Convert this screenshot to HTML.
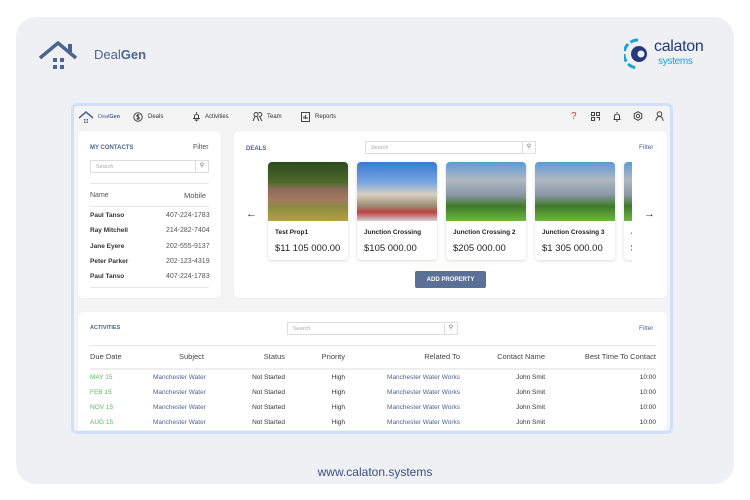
<!DOCTYPE html>
<html><head><meta charset="utf-8"><style>
*{margin:0;padding:0;box-sizing:border-box}
body{width:750px;height:500px;background:#fff;font-family:"Liberation Sans",sans-serif;position:relative;overflow:hidden}
.a{position:absolute}
.outer{left:16px;top:17px;width:718px;height:467px;background:#eef0f4;border-radius:20px}
.frame{left:71px;top:103px;width:602px;height:331px;border:3px solid #cfe0fa;border-radius:6px;background:#f4f4f5}
.panel{background:#fff;border-radius:5px;box-shadow:0 0 2px rgba(0,0,0,.06)}
.t{font-size:7px;color:#333;white-space:nowrap}
.hd{font-size:6px;color:#4a6590;font-weight:bold}
.srch{border:1px solid #ddd;height:13px;font-size:5.5px;color:#aaa;padding:3px 5px;background:#fff}
.srch i{position:absolute;right:0;top:0;width:13px;height:11px;border-left:1px solid #ddd;font-style:normal;text-align:center;color:#666;font-size:6px;line-height:11px}
.card{width:80px;height:98px;background:#fff;border-radius:4px;box-shadow:0 1px 3px rgba(0,0,0,.15);overflow:hidden}
.img{height:59px}
.ct{font-size:6.5px;font-weight:bold;color:#222;position:absolute;left:7px;top:67px;white-space:nowrap}
.cp{font-size:9.5px;color:#222;position:absolute;left:7px;top:81px;white-space:nowrap}
.g{color:#5cb85c}.b{color:#4a6590}
.r{text-align:right}
svg.i{position:absolute;fill:none;stroke:#444;stroke-width:1}
</style></head><body>
<div class="a outer"></div>
<svg class="a" style="left:38px;top:40px" width="42" height="32" viewBox="0 0 42 32"><path d="M2 18 L20 3 L38 18" fill="none" stroke="#4a6590" stroke-width="3.5"/><rect x="30" y="4" width="4" height="8" fill="#4a6590"/><rect x="15" y="18" width="4" height="4" fill="#4a6590"/><rect x="22" y="18" width="4" height="4" fill="#4a6590"/><rect x="15" y="25" width="4" height="4" fill="#4a6590"/><rect x="22" y="25" width="4" height="4" fill="#4a6590"/></svg>
<div class="a" style="left:94px;top:47px;font-size:13px;color:#4a6590">Deal<b>Gen</b></div>
<svg class="a" style="left:624px;top:38px" width="28" height="32" viewBox="0 0 28 32"><path d="M14 2 A14 14 0 0 0 14 30" fill="none" stroke="#1aa3d6" stroke-width="3" stroke-dasharray="8 3"/><circle cx="15" cy="16" r="8" fill="#243a7a"/><circle cx="17" cy="16" r="3.5" fill="#eef0f4"/></svg>
<div class="a" style="left:654px;top:38px;font-size:16px;color:#243a7a;letter-spacing:-.3px">calaton</div>
<div class="a" style="left:658px;top:56px;font-size:10px;color:#1aa3d6;letter-spacing:-.3px">systems</div>

<div class="a frame"></div>
<!-- nav -->
<svg class="a" style="left:78px;top:110px" width="16" height="14" viewBox="0 0 16 14"><path d="M1 8 L8 2 L15 8" fill="none" stroke="#4a6590" stroke-width="1.5"/><rect x="6" y="9" width="1.5" height="1.5" fill="#4a6590"/><rect x="8.5" y="9" width="1.5" height="1.5" fill="#4a6590"/><rect x="6" y="11.5" width="1.5" height="1.5" fill="#4a6590"/><rect x="8.5" y="11.5" width="1.5" height="1.5" fill="#4a6590"/></svg>
<div class="a t" style="left:98px;top:114px;font-size:5.5px;color:#4a6590">Deal<b>Gen</b></div>
<svg class="i" style="left:133px;top:112px" width="10" height="10" viewBox="0 0 10 10"><circle cx="5" cy="5" r="4.2"/><path d="M6.5 3.3 Q5 2.5 4 3.3 Q3.3 4.3 5 5 Q6.8 5.7 6 6.7 Q5 7.5 3.5 6.7 M5 2v6"/></svg>
<div class="a t" style="left:148px;top:114px;font-size:6px">Deals</div>
<svg class="i" style="left:192px;top:111px" width="9" height="11" viewBox="0 0 9 11"><path d="M4.5 1v1.5 M2.5 7 V4.5 Q4.5 2 6.5 4.5 V7 M1 7.5 H8 M4.5 9v1.5 M2.5 9h4"/></svg>
<div class="a t" style="left:205px;top:114px;font-size:6px">Activities</div>
<svg class="i" style="left:252px;top:111px" width="11" height="11" viewBox="0 0 11 11"><circle cx="4" cy="3.5" r="2"/><path d="M1 10 L3 5.5 M5 5.5 L7 10 M6.5 2 A2 2 0 1 1 7.5 5.5 L10 10"/></svg>
<div class="a t" style="left:267px;top:114px;font-size:6px">Team</div>
<svg class="i" style="left:301px;top:112px" width="9" height="10" viewBox="0 0 9 10"><rect x="0.5" y="0.5" width="8" height="9"/><path d="M3 7V4 M4.5 7V3 M6 7V5"/></svg>
<div class="a t" style="left:315px;top:114px;font-size:6px">Reports</div>
<div class="a t" style="left:571px;top:111px;font-size:10px;color:#e33">?</div>
<svg class="i" style="left:591px;top:112px" width="9" height="9" viewBox="0 0 9 9"><rect x="0.5" y="0.5" width="3" height="3"/><rect x="5.5" y="0.5" width="3" height="3"/><rect x="0.5" y="5.5" width="3" height="3"/><path d="M5.5 5.5h3v3"/></svg>
<svg class="i" style="left:613px;top:111px" width="8" height="11" viewBox="0 0 8 11"><path d="M4 1v1 M1.5 8V4.5 Q4 1.5 6.5 4.5V8 M0.5 8.5h7 M3 10h2"/></svg>
<svg class="i" style="left:633px;top:111px" width="10" height="10" viewBox="0 0 10 10"><path d="M5 0.7 L8.8 2.8 V7.2 L5 9.3 L1.2 7.2 V2.8Z"/><circle cx="5" cy="5" r="1.7"/></svg>
<svg class="i" style="left:655px;top:111px" width="9" height="10" viewBox="0 0 9 10"><circle cx="4.5" cy="3" r="2.3"/><path d="M0.8 9.8 Q1.5 5.5 4.5 5.5 Q7.5 5.5 8.2 9.8"/></svg>

<!-- contacts -->
<div class="a panel" style="left:78px;top:131px;width:143px;height:167px"></div>
<div class="a hd" style="left:90px;top:145px">MY CONTACTS</div>
<div class="a t" style="left:193px;top:144px;color:#555">Filter</div>
<div class="a srch" style="left:90px;top:160px;width:119px">Search<i>&#9906;</i></div>
<div class="a" style="left:90px;top:183px;width:119px;border-top:1px solid #e5e5e5"></div>
<div class="a t" style="left:90px;top:192px;color:#555">Name</div><div class="a t" style="left:184px;top:191px;font-size:7.5px;color:#555">Mobile</div>
<div class="a" style="left:90px;top:206px;width:119px;border-top:1px solid #e5e5e5"></div>
<div class="a t" style="left:90px;top:212px;font-weight:bold;font-size:6.5px">Paul Tanso</div><div class="a t" style="left:166px;top:212px;color:#555">407-224-1783</div>
<div class="a t" style="left:90px;top:227px;font-weight:bold;font-size:6.5px">Ray Mitchell</div><div class="a t" style="left:166px;top:227px;color:#555">214-282-7404</div>
<div class="a t" style="left:90px;top:243px;font-weight:bold;font-size:6.5px">Jane Eyere</div><div class="a t" style="left:166px;top:243px;color:#555">202-555-9137</div>
<div class="a t" style="left:90px;top:258px;font-weight:bold;font-size:6.5px">Peter Parker</div><div class="a t" style="left:166px;top:258px;color:#555">202-123-4319</div>
<div class="a t" style="left:90px;top:273px;font-weight:bold;font-size:6.5px">Paul Tanso</div><div class="a t" style="left:166px;top:273px;color:#555">407-224-1783</div>
<div class="a" style="left:90px;top:287px;width:119px;border-top:1px solid #e5e5e5"></div>

<!-- deals -->
<div class="a panel" style="left:234px;top:131px;width:433px;height:167px"></div>
<div class="a hd" style="left:246px;top:146px">DEALS</div>
<div class="a t" style="left:639px;top:144px;color:#4a6590;font-size:6.5px">Filter</div>
<div class="a srch" style="left:365px;top:141px;width:171px">Search<i>&#9906;</i></div>
<div class="a t" style="left:246px;top:208px;font-size:11px">←</div>
<div class="a t" style="left:644px;top:208px;font-size:11px">→</div>
<div class="a" style="left:266px;top:160px;width:366px;height:104px;overflow:hidden">
<div class="a card" style="left:2px;top:2px"><div class="img" style="background:linear-gradient(#2d4a1e 0%,#4c6b2a 35%,#8a6a5a 45%,#a57b60 65%,#8a8a40 75%,#b5a040 100%)"></div><div class="ct">Test Prop1</div><div class="cp">$11 105 000.00</div></div>
<div class="a card" style="left:91px;top:2px"><div class="img" style="background:linear-gradient(#3b78d8 0%,#7aa6e0 35%,#d8d0c0 55%,#9a8a70 75%,#c04040 85%,#d0d0d0 100%)"></div><div class="ct">Junction Crossing</div><div class="cp">$105 000.00</div></div>
<div class="a card" style="left:180px;top:2px"><div class="img" style="background:linear-gradient(#5a9ad8 0%,#b0b8c0 30%,#8a98a8 55%,#3f7a2a 75%,#6cb83a 100%)"></div><div class="ct">Junction Crossing 2</div><div class="cp">$205 000.00</div></div>
<div class="a card" style="left:269px;top:2px"><div class="img" style="background:linear-gradient(#5a9ad8 0%,#b0b8c0 30%,#8a98a8 55%,#3f7a2a 75%,#6cb83a 100%)"></div><div class="ct">Junction Crossing 3</div><div class="cp">$1 305 000.00</div></div>
<div class="a card" style="left:358px;top:2px"><div class="img" style="background:linear-gradient(#5a9ad8 0%,#b0b8c0 30%,#8a98a8 55%,#3f7a2a 75%,#6cb83a 100%)"></div><div class="ct">Ju</div><div class="cp">$</div></div>
</div>
<div class="a" style="left:415px;top:271px;width:71px;height:17px;background:#5a7096;border-radius:2px;color:#fff;font-size:6px;font-weight:bold;display:flex;align-items:center;justify-content:center">ADD PROPERTY</div>

<!-- activities -->
<div class="a panel" style="left:78px;top:312px;width:589px;height:118px"></div>
<div class="a hd" style="left:90px;top:325px;font-size:5.5px">ACTIVITIES</div>
<div class="a t" style="left:639px;top:325px;color:#4a6590;font-size:6.5px">Filter</div>
<div class="a srch" style="left:287px;top:322px;width:171px">Search<i>&#9906;</i></div>
<div class="a" style="left:90px;top:345px;width:566px;border-top:1px solid #e5e5e5"></div>
<div class="a" style="left:90px;top:368px;width:566px;border-top:2px solid #eee"></div>
<div class="a" style="left:90px;top:352px;width:566px;font-size:7.5px;color:#444">
<span class="a" style="left:0">Due Date</span><span class="a r" style="right:452px">Subject</span><span class="a r" style="right:371px">Status</span><span class="a r" style="right:311px">Priority</span><span class="a r" style="right:196px">Related To</span><span class="a r" style="right:111px">Contact Name</span><span class="a r" style="right:0">Best Time To Contact</span></div>
<div class="a" style="left:90px;top:374px;width:566px;height:60px;font-size:6.5px;color:#333">
<div class="a" style="top:0;width:566px;height:10px"><span class="a g" style="left:0">MAY 15</span><span class="a b" style="left:63px">Manchester Water</span><span class="a" style="right:371px">Not Started</span><span class="a" style="right:311px">High</span><span class="a b" style="right:196px">Manchester Water Works</span><span class="a" style="right:111px">John Smit</span><span class="a" style="right:0">10:00</span></div>
<div class="a" style="top:15px;width:566px;height:10px"><span class="a g" style="left:0">FEB 15</span><span class="a b" style="left:63px">Manchester Water</span><span class="a" style="right:371px">Not Started</span><span class="a" style="right:311px">High</span><span class="a b" style="right:196px">Manchester Water Works</span><span class="a" style="right:111px">John Smit</span><span class="a" style="right:0">10:00</span></div>
<div class="a" style="top:30px;width:566px;height:10px"><span class="a g" style="left:0">NOV 15</span><span class="a b" style="left:63px">Manchester Water</span><span class="a" style="right:371px">Not Started</span><span class="a" style="right:311px">High</span><span class="a b" style="right:196px">Manchester Water Works</span><span class="a" style="right:111px">John Smit</span><span class="a" style="right:0">10:00</span></div>
<div class="a" style="top:45px;width:566px;height:10px"><span class="a g" style="left:0">AUG 15</span><span class="a b" style="left:63px">Manchester Water</span><span class="a" style="right:371px">Not Started</span><span class="a" style="right:311px">High</span><span class="a b" style="right:196px">Manchester Water Works</span><span class="a" style="right:111px">John Smit</span><span class="a" style="right:0">10:00</span></div>
</div>
<div class="a" style="left:0;width:750px;top:465px;text-align:center;font-size:12px;color:#3b4f80">www.calaton.systems</div>
</body></html>
